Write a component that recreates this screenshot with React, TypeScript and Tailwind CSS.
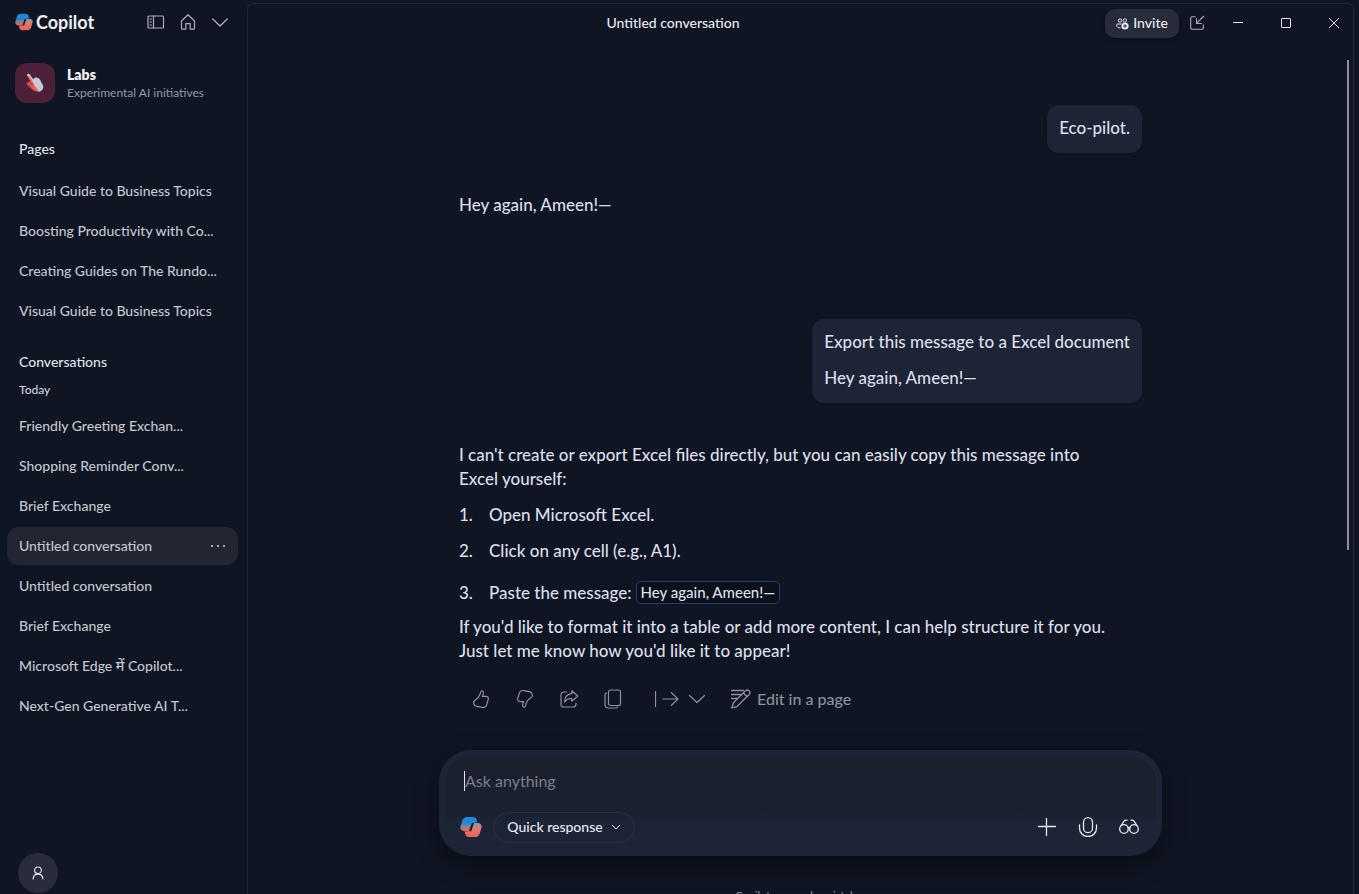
import type { ReactNode } from "react";

const pages = [
  "Visual Guide to Business Topics",
  "Boosting Productivity with Co...",
  "Creating Guides on The Rundo...",
  "Visual Guide to Business Topics",
];

const conversations = [
  { title: "Friendly Greeting Exchan..." },
  { title: "Shopping Reminder Conv..." },
  { title: "Brief Exchange" },
  { title: "Untitled conversation", active: true },
  { title: "Untitled conversation" },
  { title: "Brief Exchange" },
  { title: "Microsoft Edge में Copilot..." },
  { title: "Next-Gen Generative AI T..." },
];

function Icon({ size = 20, children }: { size?: number; children: ReactNode }) {
  return (
    <svg
      width={size}
      height={size}
      viewBox="0 0 20 20"
      fill="none"
      stroke="currentColor"
      strokeWidth="1.2"
      strokeLinecap="round"
      strokeLinejoin="round"
      className="shrink-0"
      aria-hidden="true"
    >
      {children}
    </svg>
  );
}

function CopilotLogo({ size, id }: { size: number; id: string }) {
  return (
    <svg width={size} height={size} viewBox="0 0 24 24" className="shrink-0" aria-hidden="true">
      <defs>
        <linearGradient id={`${id}-l`} x1="0" y1="0" x2="0" y2="1">
          <stop offset="0.5" stopColor="#1f87d4" />
          <stop offset="0.6" stopColor="#7d8494" />
          <stop offset="0.76" stopColor="#8b8190" />
          <stop offset="0.84" stopColor="#e0695f" />
        </linearGradient>
        <linearGradient id={`${id}-r`} x1="0" y1="0" x2="0" y2="1">
          <stop offset="0" stopColor="#8f94a8" />
          <stop offset="0.25" stopColor="#9a90a0" />
          <stop offset="0.36" stopColor="#e8776f" />
          <stop offset="1" stopColor="#de675f" />
        </linearGradient>
      </defs>
      <path
        d="M7.500 1H14.500c2 0 3 1.200 3.500 2.800L19 7H17c-2 0-3.200 1-3.800 2.800L11 16.500H5C1.500 16.500 -.2 14.300.6 11.200L2.500 5C3.300 2.400 5 1 7.500 1z"
        fill={`url(#${id}-l)`}
      />
      <path
        d="M16.500 23H9.500c-2 0-3-1.200-3.500-2.800L5 17H7c2 0 3.200-1 3.800-2.800L13 7.500h6c3.500 0 5.200 2.200 4.400 5.300l-1.900 6.200C20.700 21.600 19 23 16.500 23z"
        fill={`url(#${id}-r)`}
      />
      <path d="M13 7.500h2.200l-2.900 9H9.800z" fill="#161a27" />
    </svg>
  );
}

function LabsHand() {
  return (
    <svg width="22" height="22" viewBox="0 0 22 22" aria-hidden="true">
      <path d="M2 11.500l3.500-2 5 1 5 9.500-5-1-5-3.500z" fill="#d8564c" />
      <path
        d="M3.300 2.200c1-.8 2-.5 2.700.5l3.300 4.600 1.300-1.500c2-.7 4.200 0 5.300 1.800l3.200 6c.8 2.500-.4 4.700-2.600 5.700-2 .6-4-.3-5-2L3.800 4.500c-.6-.9-1-1.700-.5-2.300z"
        fill="#c9c8d4"
      />
      <path d="M3.600 4l2 .2 6 10.800 3.500 4.500c-2 .2-4-1.500-5-3.300z" fill="#e5695d" />
      <path d="M2.800 12l5 4.500M5.500 9.800l3.500 3" stroke="#8f2f36" strokeWidth=".8" />
    </svg>
  );
}

function SidebarRow({ title, active }: { title: string; active?: boolean }) {
  return (
    <li
      className={
        active
          ? "flex h-[38px] items-center justify-between rounded-xl bg-[#232632] px-3"
          : "flex h-[38px] items-center justify-between px-3"
      }
    >
      <a href="#" className="whitespace-nowrap text-[#c3c5cf]">
        {title}
      </a>
      {active && (
        <button type="button" aria-label="More options" className="text-[#a7aab5]">
          <svg width="16" height="16" viewBox="0 0 16 16" fill="currentColor" aria-hidden="true">
            <rect x="1" y="7" width="2" height="2" />
            <rect x="7" y="7" width="2" height="2" />
            <rect x="13" y="7" width="2" height="2" />
          </svg>
        </button>
      )}
    </li>
  );
}

function Sidebar() {
  return (
    <aside className="flex w-[247px] shrink-0 flex-col pr-[9px] pl-[7px] text-sm font-medium">
      <div className="flex h-11 items-center pl-2">
        <CopilotLogo size={18} id="brand" />
        <span className="ml-[3px] text-lg font-bold text-[#eceef6]">Copilot</span>
        <div className="ml-auto flex gap-3 pr-2 text-[#aaadb9]">
          <button type="button" aria-label="Toggle sidebar">
            <Icon>
              <rect x="2" y="4" width="15.500" height="12" rx="1" />
              <path d="M7.500 4v12M4 7h1.500M4 10h1.500M4 13h1.500" />
            </Icon>
          </button>
          <button type="button" aria-label="Home">
            <Icon>
              <path d="M3.500 9L10 2.800 16.500 9v7.200a1 1 0 0 1-1 1h-3.300v-5.500H7.800v5.500H4.500a1 1 0 0 1-1-1z" />
            </Icon>
          </button>
          <button type="button" aria-label="Expand">
            <Icon>
              <path d="M2.800 7l7.200 7 7.200-7" strokeWidth="1.400" />
            </Icon>
          </button>
        </div>
      </div>

      <a href="#" className="mt-[19px] flex items-center gap-3 pl-2">
        <span className="flex size-10 items-center justify-center rounded-xl bg-[#4b2038]">
          <LabsHand />
        </span>
        <span className="pt-0.5">
          <span className="block text-sm leading-[18px] font-extrabold text-[#f1f2f8]">Labs</span>
          <span className="block text-xs leading-[18px] font-normal text-[#9598a5]">
            Experimental AI initiatives
          </span>
        </span>
      </a>

      <h2 className="mt-9 px-3 leading-5 text-[#dfe1ea]">Pages</h2>
      <ul className="mt-[13px] space-y-0.5">
        {pages.map((title, i) => (
          <SidebarRow key={i} title={title} />
        ))}
      </ul>

      <h2 className="mt-[22px] px-3 leading-5 text-[#dfe1ea]">Conversations</h2>
      <h3 className="mt-2 px-3 text-xs leading-5 text-[#d0d2dc]">Today</h3>
      <ul className="mt-[7px] space-y-0.5">
        {conversations.map((c, i) => (
          <SidebarRow key={i} title={c.title} active={c.active} />
        ))}
      </ul>

      <button
        type="button"
        aria-label="Account"
        className="mt-auto mb-px ml-[11px] flex size-10 shrink-0 items-center justify-center rounded-full bg-[#282c3b] text-[#e4e6ef]"
      >
        <Icon size={18}>
          <circle cx="10" cy="7" r="3.700" strokeWidth="1.300" />
          <path d="M4.500 16.500c.3-3.300 2.500-5.300 5.500-5.300s5.200 2 5.500 5.300" strokeWidth="1.300" />
        </Icon>
      </button>
    </aside>
  );
}

function TopBar() {
  return (
    <header className="-mr-[5px] flex h-[38px] shrink-0 items-center text-sm font-medium text-[#e6e8f1]">
      <h1 className="flex-1 text-center">Untitled conversation</h1>
      <button
        type="button"
        className="ml-[7px] flex h-[29px] w-[74px] items-center justify-center gap-1 rounded-[10px] bg-[#282c3a] shadow-md"
      >
        <svg width="13" height="13" viewBox="0 0 13 13" fill="none" stroke="currentColor" aria-hidden="true">
          <circle cx="4" cy="3.500" r="1.700" />
          <circle cx="8.800" cy="3.500" r="1.700" />
          <path d="M5.500 7H2c-1 0-1.300.6-1.300 1.300C.7 10 2 10.900 4.500 10.900" />
          <circle cx="9" cy="9" r="3.600" fill="currentColor" stroke="none" />
          <path d="M9 7.200v3.600M7.200 9h3.600" stroke="#282c3a" />
        </svg>
        Invite
      </button>
      <button type="button" aria-label="Pop in" className="flex w-[35px] justify-center text-[#aaadb9]">
        <Icon size={18}>
          <path d="M8 3H4.500A1.500 1.500 0 0 0 3 4.500v11A1.500 1.500 0 0 0 4.500 17h11a1.500 1.500 0 0 0 1.500-1.500V12M17.500 2.500l-8 8M9.500 5v5.500H15" />
        </Icon>
      </button>
      <button type="button" aria-label="Minimize" className="flex w-12 justify-center">
        <svg width="12" height="12" viewBox="0 0 12 12" stroke="currentColor" aria-hidden="true">
          <path d="M1 5.500h10" />
        </svg>
      </button>
      <button type="button" aria-label="Maximize" className="flex w-12 justify-center">
        <svg width="12" height="12" viewBox="0 0 12 12" fill="none" stroke="currentColor" aria-hidden="true">
          <rect x="1.500" y="1.500" width="9" height="9" rx=".5" />
        </svg>
      </button>
      <button type="button" aria-label="Close" className="flex w-12 justify-center">
        <svg width="12" height="12" viewBox="0 0 12 12" stroke="currentColor" aria-hidden="true">
          <path d="M1 1l10 10M11 1L1 11" />
        </svg>
      </button>
    </header>
  );
}

function UserBubble({ children }: { children: ReactNode }) {
  return (
    <div className="ml-auto w-fit space-y-3 rounded-xl bg-[#1d2435] px-3 pt-[11px] pb-[13px] shadow-sm">
      {children}
    </div>
  );
}

function MessageActions() {
  return (
    <div className="mt-6 flex items-center pl-3 text-base text-[#8d909d]">
      <button type="button" aria-label="Like" className="mr-6">
        <Icon>
          <path d="M10.500 1.800c.9-.2 1.900.5 1.900 1.800 0 1.300-.5 2.600-1 3.800h3.800c1.600 0 2.600 1.400 2.100 2.900l-1.600 5.400c-.6 2-2.400 3.100-4.500 2.700l-5.600-1.100c-1.300-.3-2.300-1.100-2.700-2.300-.5-1.600 0-2.900 1.300-3.700 2.400-1.300 4-3.300 4.900-6.300.3-1.300.6-2.900 1.400-3.200z" />
        </Icon>
      </button>
      <button type="button" aria-label="Dislike" className="mr-6 rotate-180">
        <Icon>
          <path d="M10.500 1.800c.9-.2 1.900.5 1.900 1.800 0 1.300-.5 2.600-1 3.800h3.800c1.600 0 2.600 1.400 2.100 2.900l-1.600 5.400c-.6 2-2.400 3.100-4.500 2.700l-5.600-1.100c-1.300-.3-2.300-1.100-2.700-2.300-.5-1.600 0-2.900 1.300-3.700 2.400-1.300 4-3.300 4.900-6.300.3-1.300.6-2.900 1.400-3.200z" />
        </Icon>
      </button>
      <button type="button" aria-label="Share" className="mr-6">
        <Icon>
          <path d="M7.500 3H4.800A2.800 2.800 0 0 0 2 5.800v9.400A2.800 2.800 0 0 0 4.800 18h9.400a2.800 2.800 0 0 0 2.800-2.800V14" />
          <path d="M12.800 1.800l6 5.200-6 5.200V9.300C9.500 9.300 7.300 10.500 5.500 13c.2-4.800 3-8 7.300-8.300z" />
        </Icon>
      </button>
      <button type="button" aria-label="Copy" className="mr-8">
        <Icon>
          <rect x="5.500" y="1" width="12" height="15.500" rx="2" />
          <path d="M3.200 4C2.400 4.500 2 5 2 6v9.500C2 18 3.500 19 5.500 19h7c1 0 1.700-.4 2.100-1.200" />
        </Icon>
      </button>
      <button type="button" aria-label="Continue" className="mr-2">
        <svg width="24" height="20" viewBox="0 0 24 20" fill="none" stroke="currentColor" strokeWidth="1.200" aria-hidden="true">
          <path d="M.5 2v16M7.500 10H23M16 3.200l7 6.800-7 6.800" />
        </svg>
      </button>
      <button type="button" aria-label="More actions" className="mr-6">
        <Icon>
          <path d="M2.500 6.500L10 13.500l7.500-7" />
        </Icon>
      </button>
      <button type="button" className="flex items-center gap-1.5">
        <svg width="20" height="20" viewBox="0 0 20 20" fill="none" stroke="currentColor" strokeWidth="1.300" strokeLinejoin="round" aria-hidden="true">
          <path d="M0 1.500h13M0 5.500h10.500M0 9.500h6.500" />
          <path d="M.8 19l1.800-5.500L14.500 1.800c1-1 2.500-1 3.700.2s1 2.500 0 3.500L6.300 17.300zM12.300 4l3.700 3.700" />
        </svg>
        Edit in a page
      </button>
    </div>
  );
}

function Messages() {
  return (
    <div className="mx-auto w-full max-w-[683px] pt-[63px] text-[17px] leading-6 font-medium text-[#dcdfea]">
      <UserBubble>
        <p>Eco-pilot.</p>
      </UserBubble>
      <p className="mt-10">Hey again, Ameen!—</p>

      <div className="mt-[102px]">
        <UserBubble>
          <p>Export this message to a Excel document</p>
          <p>Hey again, Ameen!—</p>
        </UserBubble>
      </div>

      <p className="mt-10 max-w-[660px]">
        I can't create or export Excel files directly, but you can easily copy this message into
        Excel yourself:
      </p>
      <ol className="mt-3 space-y-3">
        <li className="flex">
          <span className="w-[30px]">1.</span>Open Microsoft Excel.
        </li>
        <li className="flex">
          <span className="w-[30px]">2.</span>Click on any cell (e.g., A1).
        </li>
        <li className="flex pt-1.5">
          <span className="w-[30px]">3.</span>Paste the message:
          <code className="ml-1 h-[23px] rounded-[5px] border border-[#2d3c70] bg-[#0c101b] px-1 font-[inherit] text-[15px] leading-[21px]">
            Hey again, Ameen!—
          </code>
        </li>
      </ol>
      <p className="mt-2.5 max-w-[660px]">
        If you'd like to format it into a table or add more content, I can help structure it for you.
        Just let me know how you'd like it to appear!
      </p>
      <MessageActions />
    </div>
  );
}

function Composer() {
  return (
    <form className="mx-auto w-full max-w-[723px] shrink-0 rounded-[32px] bg-[#1c2436] p-1.5 shadow-[0_8px_24px_rgba(0,0,0,0.4)]">
      <div className="rounded-[26px] bg-linear-to-b from-[#1b202c] via-[#1b2030] via-60% to-[#1c2436] to-70%">
        <div className="flex h-[50px] items-center pl-[19px]">
          <span className="h-5 w-px bg-[#e6e8f1]" />
          <input
            type="text"
            aria-label="Message Copilot"
            placeholder="Ask anything"
            className="flex-1 bg-transparent text-base outline-none placeholder:text-[#7c7f8c]"
          />
        </div>
        <div className="flex h-11 items-center pr-[17px] pb-0.5 pl-[15px] text-[#e6e8f1]">
          <CopilotLogo size={22} id="composer" />
          <button
            type="button"
            className="ml-[11px] flex h-[31px] w-[142px] items-center justify-center gap-2 rounded-2xl border border-[#2a3040] text-sm font-medium"
          >
            Quick response
            <svg width="10" height="10" viewBox="0 0 10 10" fill="none" stroke="currentColor" aria-hidden="true">
              <path d="M1 3l4 4 4-4" />
            </svg>
          </button>
          <div className="ml-auto flex gap-[21px]">
            <button type="button" aria-label="Add">
              <Icon>
                <path d="M1.500 9.500h17M9.500 1.500v17" strokeWidth="1.300" />
              </Icon>
            </button>
            <button type="button" aria-label="Voice">
              <Icon>
                <rect x="5.500" y=".7" width="9" height="15" rx="4.500" strokeWidth="1.300" />
                <path d="M1.500 8v3a8.500 8.500 0 0 0 17 0V8" strokeWidth="1.300" />
              </Icon>
            </button>
            <button type="button" aria-label="Vision">
              <Icon>
                <g strokeWidth="1.300">
                  <circle cx="5" cy="12" r="4.300" />
                  <circle cx="15" cy="12" r="4.300" />
                  <path d="M9 10.800c.6-.4 1.400-.4 2 0M1.800 9L5 4.200C5.700 3.200 6.800 3 8 3.200M18.200 9L15 4.200c-.7-1-1.800-1.200-3-1" />
                </g>
              </Icon>
            </button>
          </div>
        </div>
      </div>
    </form>
  );
}

export default function App() {
  return (
    <div className="flex h-screen overflow-hidden bg-[#0f1522] font-['Lato','Noto_Sans',sans-serif]">
      <Sidebar />
      <main className="relative mt-[3px] mr-[5px] flex min-w-0 flex-1 flex-col rounded-t-md border-x border-t border-[#222737]">
        <TopBar />
        <div className="min-h-0 flex-1 overflow-hidden">
          <Messages />
        </div>
        <Composer />
        <p className="h-[38px] shrink-0 overflow-hidden pt-8 text-center text-[11px] leading-4 text-[#9598a5]">
          Copilot may make mistakes
        </p>
        <div className="absolute top-14 right-1 h-[490px] w-0.5 bg-[#8d8f99]" />
      </main>
    </div>
  );
}
